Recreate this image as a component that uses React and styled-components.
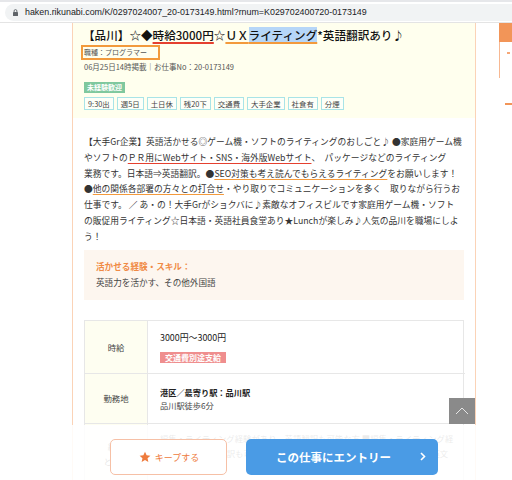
/* React */
import React from 'react';

/* Styles */
import styled, { createGlobalStyle } from 'styled-components';

const GlobalStyle = createGlobalStyle`
    html, body {
        margin: 0;
        padding: 0;
        background: #fff;
    }
    body {
        font-family: "Noto Sans CJK JP", "Noto Sans", sans-serif;
        color: #333;
    }
`;

/* Styled Components */
const Page = styled.div`
    position: relative;
    width: 512px;
    height: 480px;
    overflow: hidden;
    background: #fff;
`;

const BrowserBar = styled.div`
    height: 17px;
    padding: 2px 0 1px 5px;
    border-top: 2px solid #e6e7ea;
    border-bottom: 1px solid #e4e4e4;
    background: #fff;
`;

const Omnibox = styled.div`
    height: 17px;
    display: flex;
    align-items: center;
    gap: 7px;
    padding-left: 8px;
    border-radius: 9px 0 0 9px;
    background: #f1f3f4;
    font-family: "Liberation Sans", Arial, sans-serif;
    font-size: 8.9px;
    line-height: 17px;
    color: #202124;
    white-space: nowrap;
`;

const Viewport = styled.div`
    display: flex;
    align-items: flex-start;
    height: 457px;
`;

const Main = styled.main`
    margin-left: 72px;
    width: 402px;
    min-height: 457px;
    border-left: 1px solid #fbd3b7;
    border-right: 1px solid #fbd3b7;
`;

const Header = styled.header`
    background: #ffffee;
    padding: 3px 11px 8px 10px;
    line-height: 11px;
`;

const Title = styled.h1`
    margin: 0;
    font-size: 11.6px;
    line-height: 18px;
    font-weight: 500;
    color: #111;
    white-space: nowrap;
`;

const Mark = styled.span`
    text-decoration: underline;
    text-decoration-color: ${props => props.tone === 'red' ? '#e5402f' : '#f39a3c'};
    text-decoration-thickness: ${props => props.thick ? '2px' : '1.4px'};
    text-underline-offset: 2px;
    text-decoration-skip-ink: none;
`;

const Selected = styled.span`
    background: #b6d6f8;
    padding-bottom: 1px;
`;

const OccBox = styled.div`
    width: fit-content;
    margin: 1px 0 0 -2px;
    padding: 0 11px 0 1px;
    border: 2px solid #f29a3c;
    font-size: 7px;
    line-height: 11px;
    color: #555;
`;

const MetaLine = styled.div`
    margin-top: 1px;
    padding-left: 1px;
    font-size: 7.5px;
    line-height: 11px;
    color: #555;
    white-space: nowrap;
`;

const GreenBadge = styled.div`
    width: fit-content;
    margin: 10px 0 0 1px;
    padding: 0 3px;
    background: #7fc89e;
    color: #fff;
    font-size: 7px;
    font-weight: bold;
    line-height: 11px;
`;

const TagRow = styled.div`
    display: flex;
    gap: 3px;
    margin-top: 4px;
    padding-left: 1px;
`;

const Tag = styled.span`
    padding: 0 3px;
    border: 1px solid #a9e4e7;
    background: #fdfff8;
    font-size: 7.4px;
    line-height: 11px;
    color: #444;
    white-space: nowrap;
`;

const Body = styled.section`
    padding: 16px 11px 0;
`;

const Description = styled.p`
    margin: 0;
    font-size: 8.75px;
    line-height: 15.75px;
    color: #333;
    white-space: nowrap;
`;

const SkillBox = styled.div`
    margin-top: 6px;
    padding: 9px 12px 11px;
    background: #fdf6ef;
`;

const SkillHead = styled.div`
    font-size: 8.6px;
    line-height: 14px;
    font-weight: bold;
    color: #f08a45;
`;

const SkillText = styled.div`
    margin-top: 2px;
    font-size: 8.6px;
    line-height: 14px;
    color: #444;
`;

const Table = styled.div`
    display: grid;
    grid-template-columns: 63px 1fr;
    margin-top: 20px;
    border: 1px solid #e7e7e7;
    border-bottom: none;
`;

const LabelCell = styled.div`
    display: flex;
    align-items: center;
    justify-content: center;
    height: ${props => props.h}px;
    background: #fefef1;
    border-right: 1px solid #e7e7e7;
    border-bottom: 1px solid #e7e7e7;
    font-size: 8.4px;
    line-height: 15px;
    color: #444;
    text-align: center;
`;

const ValueCell = styled.div`
    padding: ${props => props.pad || '10px'} 12px 0;
    border-bottom: 1px solid #e7e7e7;
    color: #222;
`;

const Price = styled.div`
    font-size: 8.9px;
    line-height: 14px;
`;

const PinkBadge = styled.div`
    width: fit-content;
    margin-top: 7px;
    padding: 0 5px;
    background: #ef8e8e;
    color: #fff;
    font-size: 8px;
    font-weight: bold;
    line-height: 11px;
`;

const Place = styled.div`
    font-size: 8.2px;
    line-height: 13px;
    font-weight: ${props => props.bold ? 'bold' : 'normal'};
    color: ${props => props.bold ? '#222' : '#444'};
`;

const FadedText = styled.div`
    font-size: 8.4px;
    line-height: 15px;
    color: #666;
    white-space: nowrap;
`;

const Sidebar = styled.aside`
    margin-left: 23px;
    width: 30px;
`;

const SideHead = styled.div`
    height: 19px;
    background: #f29558;
`;

const SideBox = styled.div`
    height: 36px;
    border-left: 1px solid #f7b892;
    padding: 10px 0 0 7px;
    box-sizing: border-box;
`;

const SideDot = styled.div`
    width: 3px;
    height: 2px;
    background: #f6a878;
`;

const SideLine = styled.div`
    margin: 25px 0 0 6px;
    height: 2px;
    background: #f29558;
`;

const BackToTop = styled.div`
    position: absolute;
    left: 449px;
    top: 398px;
    width: 26px;
    height: 26px;
    display: flex;
    align-items: center;
    justify-content: center;
    background: #8a8a8a;
`;

const BottomBar = styled.div`
    position: absolute;
    left: 0;
    right: 0;
    top: 425px;
    bottom: 0;
    padding: 14px 0 0 73px;
    background: rgba(255, 255, 255, 0.87);
`;

const ButtonRow = styled.div`
    width: 401px;
    display: flex;
    justify-content: center;
    gap: 19px;
`;

const KeepButton = styled.button`
    width: 117px;
    height: 36px;
    display: flex;
    align-items: center;
    justify-content: center;
    gap: 4px;
    padding: 0 0 0 2px;
    border: 1px solid #f6c0a6;
    border-radius: 5px;
    background: #fff;
    font-family: "Noto Sans CJK JP", sans-serif;
    font-size: 9px;
    color: #ee7b3d;
`;

const EntryButton = styled.button`
    position: relative;
    width: 192px;
    height: 36px;
    padding: 0 16px 0 0;
    border: none;
    border-radius: 5px;
    background: #4a9be5;
    font-family: "Noto Sans CJK JP", sans-serif;
    font-size: 11.5px;
    font-weight: bold;
    color: #fff;
`;

const EntryArrow = styled.span`
    position: absolute;
    right: 12px;
    top: 13px;
    display: flex;
`;

const tags = ['9:30出', '週5日', '土日休', '残20下', '交通費', '大手企業', '社食有', '分煙'];

const Lock = () => (
    <svg width="5" height="7" viewBox="0 0 5 7">
        <rect x="0" y="3" width="5" height="4" rx="0.6" fill="#5f6368" />
        <path d="M1.1 3V2a1.4 1.4 0 0 1 2.8 0v1" fill="none" stroke="#5f6368" strokeWidth="0.9" />
    </svg>
);

const Star = () => (
    <svg width="12" height="12" viewBox="0 0 24 24">
        <path d="M12 1.5l3.2 7 7.6.8-5.7 5.1 1.6 7.5L12 18l-6.7 3.9 1.6-7.5-5.7-5.1 7.6-.8z" fill="#ee7b3d" />
    </svg>
);

const App = () => {
    return (
        <Page>
            <GlobalStyle />
            <BrowserBar>
                <Omnibox>
                    <Lock />
                    haken.rikunabi.com/K/0297024007_20-0173149.html?rnum=K029702400720-0173149
                </Omnibox>
            </BrowserBar>
            <Viewport>
                <Main>
                    <Header>
                        <Title>
                            【品川】☆◆<Mark tone="red" thick>時給3000円</Mark>☆<Mark thick>ＵＸ<Selected>ライティング</Selected></Mark>*英語翻訳あり♪
                        </Title>
                        <OccBox>職種：プログラマー</OccBox>
                        <MetaLine>06月25日14時掲載｜お仕事No：20-0173149</MetaLine>
                        <GreenBadge>未経験歓迎</GreenBadge>
                        <TagRow>
                            {tags.map(tag => <Tag key={tag}>{tag}</Tag>)}
                        </TagRow>
                    </Header>
                    <Body>
                        <Description>
                            【大手Gr企業】英語活かせる◎ゲーム機・ソフトのライティングのおしごと♪ ●家庭用ゲーム機<br />
                            やソフトの<Mark tone="red">ＰＲ用にWebサイト・SNS・海外版Webサイト</Mark>、　パッケージなどのライティング<br />
                            業務です。日本語⇒英語翻訳。●<Mark>SEO対策も考え読んでもらえるライティング</Mark>をお願いします！<br />
                            ●<Mark>他の関係各部署の方々との打合せ</Mark>・やり取りでコミュニケーションを多く　取りながら行うお<br />
                            仕事です。 ／ あ・の！大手Grがショクバに♪素敵なオフィスビルです家庭用ゲーム機・ソフト<br />
                            の販促用ライティング☆日本語・英語社員食堂あり★Lunchが楽しみ♪人気の品川を職場にしよ<br />
                            う！
                        </Description>
                        <SkillBox>
                            <SkillHead>活かせる経験・スキル：</SkillHead>
                            <SkillText>英語力を活かす、その他外国語</SkillText>
                        </SkillBox>
                        <Table>
                            <LabelCell h={52}>時給</LabelCell>
                            <ValueCell>
                                <Price>3000円～3000円</Price>
                                <PinkBadge>交通費別途支給</PinkBadge>
                            </ValueCell>
                            <LabelCell h={49}>勤務地</LabelCell>
                            <ValueCell pad="12px">
                                <Place bold>港区／最寄り駅：品川駅</Place>
                                <Place>品川駅徒歩6分</Place>
                            </ValueCell>
                            <LabelCell h={60}>経験<br />ところ</LabelCell>
                            <ValueCell pad="7px">
                                <FadedText>編集・ライティング経験があり、英語翻訳も可能な方 ■編集・ライティング経</FadedText>
                                <FadedText>験があり、英語翻訳も可能な方 ■英語を活かしたお仕事経験のある方 ■英文</FadedText>
                            </ValueCell>
                        </Table>
                    </Body>
                </Main>
                <Sidebar>
                    <SideHead />
                    <SideBox>
                        <SideDot />
                    </SideBox>
                    <SideLine />
                </Sidebar>
            </Viewport>
            <BackToTop>
                <svg width="14" height="8" viewBox="0 0 14 8">
                    <path d="M1 7l6-6 6 6" fill="none" stroke="#e6e6e6" strokeWidth="1" />
                </svg>
            </BackToTop>
            <BottomBar>
                <ButtonRow>
                    <KeepButton>
                        <Star />
                        キープする
                    </KeepButton>
                    <EntryButton>
                        この仕事にエントリー
                        <EntryArrow>
                            <svg width="6" height="9" viewBox="0 0 6 9">
                                <path d="M1 1l3.5 3.5L1 8" fill="none" stroke="#fff" strokeWidth="1.6" />
                            </svg>
                        </EntryArrow>
                    </EntryButton>
                </ButtonRow>
            </BottomBar>
        </Page>
    );
};

export default App;
